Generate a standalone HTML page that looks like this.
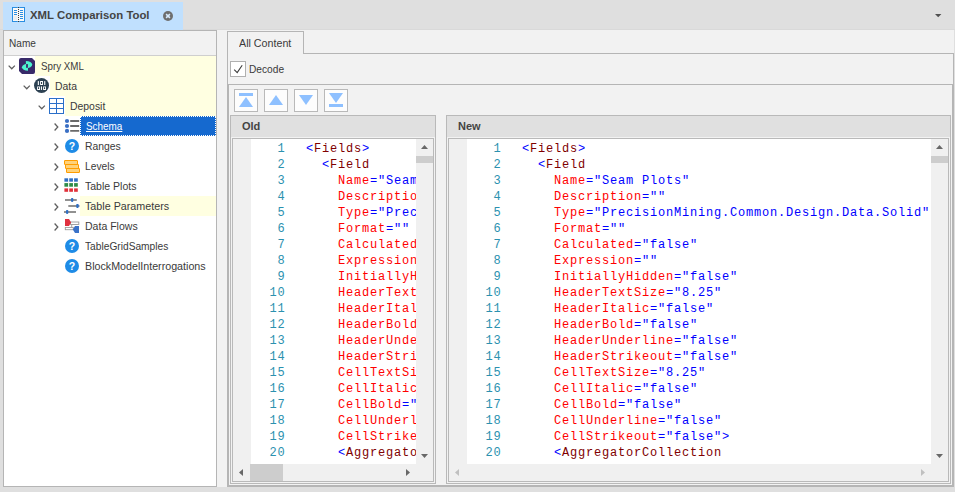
<!DOCTYPE html>
<html><head><meta charset="utf-8"><title>XML Comparison Tool</title>
<style>
html,body{margin:0;padding:0}
body{width:955px;height:492px;background:#dfdfdf;position:relative;overflow:hidden;font-family:"Liberation Sans",sans-serif;font-size:11px;color:#3c3c3c}
.abs,.b{position:absolute}
.b{background:#b5b5b5}
#tab{left:3px;top:2px;width:180px;height:28px;background:#c0e0fe}
.tx{position:absolute;transform-origin:0 0;white-space:nowrap;line-height:14px;font-size:11px;color:#3a3a3a}
#left{left:3px;top:30px;width:214px;height:457px;background:#fff;border:1px solid #b5b5b5;box-sizing:border-box}
#lhead{left:4px;top:31px;width:212px;height:24px;background:#f2f2f2;border-bottom:1px solid #cfcfcf}
.row{position:absolute;height:20px;left:4px;width:212px}
.hl{position:absolute;top:0;height:20px;right:0;background:#ffffe1}
.row svg{position:absolute}
#right{left:217px;top:30px;width:737px;height:457px;background:#f2f2f2}
.code{font-family:"Liberation Mono",monospace;font-size:12px;letter-spacing:0.8px;line-height:16px}
.ln{position:relative;height:16px;white-space:pre}
.p{color:#0000ff}.t{color:#800000}.a{color:#ff0000}
.ln .no{position:absolute;left:0;top:0;width:35.500px;text-align:right;color:#2b91af}
.ln .cd{position:absolute;top:0;margin-left:56px}
.ed{position:absolute;background:#fff;overflow:hidden}
.mg{position:absolute;left:0;top:0;bottom:0;width:18px;background:#f0f0f0}
.grp{position:absolute;border:1px solid #b9b9b9;box-sizing:border-box;background:#f2f2f2}
.gh{position:absolute;left:0;top:0;right:0;height:21px;background:#e0e0e0}
.edb{position:absolute;border:1px solid #b9b9b9;box-sizing:border-box;background:#fff}
.sb{position:absolute;background:#f0f0f0}
.th{position:absolute;background:#cdcdcd}
.btn{position:absolute;top:89px;width:24px;height:23px;box-sizing:border-box;border:1px solid #b9b9b9;background:#fdfdfd}
.btn svg{position:absolute;left:0;top:0}
</style></head><body>
<!-- top document tab -->
<div class="b" style="left:0;top:29px;width:955px;height:1px;background:#d9d9d9"></div>
<div id="tab" class="abs">
<svg class="abs" style="left:9px;top:5px" width="14" height="16" viewBox="0 0 14 16"><rect x="0.500" y="0.500" width="12" height="14" fill="#fdfaf7" stroke="#2a8ee2"/><rect x="1.300" y="8.600" width="3.900" height="4.600" fill="#eceef0"/><rect x="5.800" y="0" width="1.400" height="15" fill="#f1f4f8"/><g stroke="#2a8ee2" stroke-width="1"><path d="M2 3.500h3M2 5.500h3M2 7.500h3M8 3.500h3M8 5.500h3M8 7.500h3M8 9.500h3M8 11.500h3"/></g><path d="M6.500 0v15" stroke="#3c3c3c" stroke-width="1" stroke-dasharray="1 1"/></svg>
<span class="tx" style="left:27px;top:6px;font-weight:bold;font-size:11px;color:#444;transform:scaleX(1.033)">XML Comparison Tool</span>
<svg class="abs" style="left:160px;top:9px" width="10" height="10" viewBox="0 0 10 10"><circle cx="5" cy="5" r="5" fill="#6e6e6e"/><path d="M3.100 3.100l3.800 3.800M6.900 3.100l-3.800 3.800" stroke="#d6e9fb" stroke-width="1.500"/></svg>
</div>
<svg class="abs" style="left:935px;top:14px" width="7" height="4" viewBox="0 0 7 4"><path d="M0 0h6.400l-3.200 3.200z" fill="#505050"/></svg>

<div id="right" class="abs"></div>
<div id="left" class="abs"></div>
<div id="lhead" class="abs"><span class="tx" style="left:5.2px;top:5px;transform:scaleX(0.917)">Name</span></div>

<!-- tree -->
<div class="row" style="top:56px"><div class="hl" style="left:31px"></div>
<svg style="left:3.7px;top:9px" width="9" height="6" viewBox="0 0 9 6"><path d="M0.650 0.650l3.100 3.100 3.100-3.100" fill="none" stroke="#606060" stroke-width="1.300"/></svg>
<svg style="left:15px;top:2px" width="16" height="16" viewBox="0 0 16 16"><path d="M2 0H13L16 3V14a2 2 0 0 1-2 2H3L0 13V2a2 2 0 0 1 2-2z" fill="#382a69"/><path d="M6.900 2.900A6.300 3.650 0 0 1 6.900 10.200z" fill="#4df5cf"/><path d="M9 5.700A6.100 3.550 0 0 0 9 12.800z" fill="#4df5cf"/><rect x="7.100" y="6.100" width="1.800" height="3.700" fill="#382a69"/></svg>
<span class="tx" style="left:36.7px;top:3px;transform:scaleX(0.888)">Spry XML</span></div>

<div class="row" style="top:76px"><div class="hl" style="left:46px"></div>
<svg style="left:18.7px;top:9px" width="9" height="6" viewBox="0 0 9 6"><path d="M0.650 0.650l3.100 3.100 3.100-3.100" fill="none" stroke="#606060" stroke-width="1.300"/></svg>
<svg style="left:30px;top:2px" width="16" height="16" viewBox="0 0 16 16"><circle cx="7.500" cy="7.500" r="7.500" fill="#2c4152"/><g fill="#fff" fill-rule="evenodd"><rect x="3.800" y="3.100" width="1.100" height="3.900"/><path d="M6.100 3.100h2.900v3.900h-2.900zM7 4h1.100v2.100h-1.100z"/><rect x="10.200" y="3.100" width="1.100" height="3.900"/><path d="M3.100 8.400h2.900v3.500h-2.900zM4 9.300h1.100v1.700h-1.100z"/><rect x="6.900" y="8.400" width="1.100" height="3.500"/><path d="M9.100 8.400h2.900v3.500h-2.900zM10 9.300h1.100v1.700h-1.100z"/></g></svg>
<span class="tx" style="left:51px;top:3px;transform:scaleX(0.946)">Data</span></div>

<div class="row" style="top:96px"><div class="hl" style="left:61px"></div>
<svg style="left:33.7px;top:9px" width="9" height="6" viewBox="0 0 9 6"><path d="M0.650 0.650l3.100 3.100 3.100-3.100" fill="none" stroke="#606060" stroke-width="1.300"/></svg>
<svg style="left:45px;top:2px" width="16" height="16" viewBox="0 0 16 16"><rect x="0.500" y="0.500" width="14" height="15" fill="#fff" stroke="#2a6fc9"/><path d="M0.500 5.500h14M0.500 10.500h14M7.500 0.500v15" stroke="#2a6fc9" fill="none"/></svg>
<span class="tx" style="left:66.4px;top:3px;transform:scaleX(0.947)">Deposit</span></div>

<div class="row" style="top:116px"><div class="abs" style="left:76px;top:0;height:20px;right:0;background:#1569cf;outline:1px dotted #fff;outline-offset:-1px"></div>
<svg style="left:50px;top:7px" width="5" height="8" viewBox="0 0 5 8"><path d="M0.600 0.500l3.200 3.500-3.200 3.500" fill="none" stroke="#606060" stroke-width="1.300"/></svg>
<svg style="left:60px;top:2px" width="16" height="16" viewBox="0 0 16 16"><g fill="#3a6fc4"><circle cx="3" cy="3" r="2.100"/><circle cx="3" cy="8" r="2.100"/><circle cx="3" cy="12.900" r="2.100"/></g><path d="M6.200 3h9M6.200 8h9M6.200 12.900h9" stroke="#6a6a6a" stroke-width="1.800"/></svg>
<span class="tx" style="left:81.8px;top:3px;color:#fff;text-decoration:underline;transform:scaleX(0.9)">Schema</span></div>

<div class="row" style="top:136px">
<svg style="left:50px;top:7px" width="5" height="8" viewBox="0 0 5 8"><path d="M0.600 0.500l3.200 3.500-3.200 3.500" fill="none" stroke="#606060" stroke-width="1.300"/></svg>
<svg style="left:61px;top:3px" width="14" height="14" viewBox="0 0 14 14"><circle cx="7" cy="7" r="7" fill="#1e8be6"/><text x="7" y="11" text-anchor="middle" font-family="Liberation Sans,sans-serif" font-weight="bold" font-size="10.5" fill="#fff">?</text></svg>
<span class="tx" style="left:81.1px;top:3px;transform:scaleX(0.942)">Ranges</span></div>

<div class="row" style="top:156px">
<svg style="left:50px;top:7px" width="5" height="8" viewBox="0 0 5 8"><path d="M0.600 0.500l3.200 3.500-3.200 3.500" fill="none" stroke="#606060" stroke-width="1.300"/></svg>
<svg style="left:60px;top:2px" width="16" height="16" viewBox="0 0 16 16"><g fill="#ffd27a" stroke="#ff9d00" stroke-width="1"><rect x="0.500" y="2.500" width="13" height="4" rx="0.300"/><rect x="1.500" y="6.500" width="13" height="4" rx="0.300"/><rect x="2.500" y="10.500" width="13" height="4" rx="0.300"/></g></svg>
<span class="tx" style="left:81.1px;top:3px;transform:scaleX(0.931)">Levels</span></div>

<div class="row" style="top:176px">
<svg style="left:50px;top:7px" width="5" height="8" viewBox="0 0 5 8"><path d="M0.600 0.500l3.200 3.500-3.200 3.500" fill="none" stroke="#606060" stroke-width="1.300"/></svg>
<svg style="left:60px;top:2px" width="16" height="16" viewBox="0 0 16 16"><g fill="#2f6fc4"><rect x="0.400" y="0.300" width="3.700" height="3.400"/><rect x="5.250" y="0.300" width="3.700" height="3.400"/><rect x="10.100" y="0.300" width="3.700" height="3.400"/></g><g fill="#2e8b47"><rect x="0.400" y="5.100" width="3.700" height="3.600"/><rect x="5.250" y="5.100" width="3.700" height="3.600"/><rect x="10.100" y="5.100" width="3.700" height="3.600"/></g><g fill="#e0303a"><rect x="0.400" y="10.400" width="3.700" height="3.400"/><rect x="5.250" y="10.400" width="3.700" height="3.400"/><rect x="10.100" y="10.400" width="3.700" height="3.400"/></g></svg>
<span class="tx" style="left:81.1px;top:3px;transform:scaleX(0.957)">Table Plots</span></div>

<div class="row" style="top:196px"><div class="hl" style="left:76px"></div>
<svg style="left:50px;top:7px" width="5" height="8" viewBox="0 0 5 8"><path d="M0.600 0.500l3.200 3.500-3.200 3.500" fill="none" stroke="#606060" stroke-width="1.300"/></svg>
<svg style="left:60px;top:2px" width="16" height="16" viewBox="0 0 16 16"><path d="M1 2h11.800M4.300 8h11.200M0 14h12" stroke="#6e6e6e" stroke-width="1.600"/><g fill="#2f6fc4"><rect x="7" y="0.100" width="2.300" height="3.800" rx="0.800"/><rect x="12.200" y="6.100" width="2.500" height="3.800" rx="0.800"/><rect x="2" y="12.100" width="2.300" height="3.800" rx="0.800"/></g></svg>
<span class="tx" style="left:81.1px;top:3px;transform:scaleX(0.976)">Table Parameters</span></div>

<div class="row" style="top:216px">
<svg style="left:50px;top:7px" width="5" height="8" viewBox="0 0 5 8"><path d="M0.600 0.500l3.200 3.500-3.200 3.500" fill="none" stroke="#606060" stroke-width="1.300"/></svg>
<svg style="left:60px;top:2px" width="16" height="16" viewBox="0 0 16 16"><g fill="#fff" stroke="#9a9a9a" stroke-width="0.900"><rect x="6.500" y="4" width="8.300" height="2.500"/><rect x="1.300" y="9.400" width="8" height="2.300"/><path d="M7.700 6.500v2.900"/></g><path d="M1 1h4l2.100 3.500-2.100 3.500h-4z" fill="#e0303f"/><path d="M15 8.100h-4l-2.200 3.400 2.200 3.400h4z" fill="#3a72c8"/></svg>
<span class="tx" style="left:81.1px;top:3px;transform:scaleX(0.958)">Data Flows</span></div>

<div class="row" style="top:236px">
<svg style="left:61px;top:3px" width="14" height="14" viewBox="0 0 14 14"><circle cx="7" cy="7" r="7" fill="#1e8be6"/><text x="7" y="11" text-anchor="middle" font-family="Liberation Sans,sans-serif" font-weight="bold" font-size="10.5" fill="#fff">?</text></svg>
<span class="tx" style="left:81.1px;top:3px;transform:scaleX(0.927)">TableGridSamples</span></div>

<div class="row" style="top:256px">
<svg style="left:61px;top:3px" width="14" height="14" viewBox="0 0 14 14"><circle cx="7" cy="7" r="7" fill="#1e8be6"/><text x="7" y="11" text-anchor="middle" font-family="Liberation Sans,sans-serif" font-weight="bold" font-size="10.5" fill="#fff">?</text></svg>
<span class="tx" style="left:81.1px;top:3px;transform:scaleX(0.972)">BlockModelInterrogations</span></div>

<!-- right: tab control -->
<div class="b" style="left:227px;top:53px;width:727px;height:1px"></div>
<div class="b" style="left:227px;top:31px;width:1px;height:456px"></div>
<div class="b" style="left:953px;top:53px;width:1px;height:434px"></div>
<div class="b" style="left:227px;top:486px;width:727px;height:1px"></div>
<div class="abs" style="left:227px;top:31px;width:77px;height:23px;border:1px solid #b5b5b5;border-bottom:none;box-sizing:border-box;background:#f2f2f2"></div>
<span class="tx" style="left:239.1px;top:36px;transform:scaleX(0.972)">All Content</span>
<!-- decode checkbox -->
<div class="abs" style="left:230px;top:61px;width:16px;height:16px;border:1px solid #b0b0b0;box-sizing:border-box;background:#fff"></div>
<svg class="abs" style="left:233px;top:64px" width="11" height="10" viewBox="0 0 11 10"><path d="M1.200 5.600l3 3 5-7.300" fill="none" stroke="#3c3c3c" stroke-width="1.100"/></svg>
<span class="tx" style="left:248.9px;top:62px;transform:scaleX(0.924)">Decode</span>
<!-- inner panel -->
<div class="b" style="left:228px;top:84px;width:725px;height:1px"></div>
<div class="b" style="left:228px;top:84px;width:1px;height:402px"></div>
<div class="b" style="left:952px;top:84px;width:1px;height:402px"></div>
<div class="b" style="left:228px;top:485px;width:725px;height:1px"></div>
<!-- toolbar buttons -->
<div class="btn" style="left:234px"><svg width="22" height="21" viewBox="0 0 22 21"><rect x="4" y="3" width="14" height="3" fill="#8ec0ff"/><path d="M11 7l7 10H4z" fill="#8ec0ff"/></svg></div>
<div class="btn" style="left:264px"><svg width="22" height="21" viewBox="0 0 22 21"><path d="M11 5l7 10H4z" fill="#8ec0ff"/></svg></div>
<div class="btn" style="left:294px"><svg width="22" height="21" viewBox="0 0 22 21"><path d="M11 15l7-10H4z" fill="#8ec0ff"/></svg></div>
<div class="btn" style="left:324px"><svg width="22" height="21" viewBox="0 0 22 21"><rect x="4" y="14" width="14" height="3" fill="#8ec0ff"/><path d="M11 13l7-10H4z" fill="#8ec0ff"/></svg></div>

<!-- Old group -->
<div class="grp" style="left:230px;top:115px;width:206px;height:369px"><div class="gh"></div></div>
<span class="tx" style="left:242px;top:119px;font-weight:bold;color:#444">Old</span>
<div class="edb" style="left:232px;top:138px;width:202px;height:344px"></div>
<div class="ed code" style="left:233px;top:140px;width:183px;height:324px"><div class="mg"></div>
<div style="position:absolute;left:17px;top:1px">
<div class="ln"><span class="no">1</span><span class="cd" style="left:0px"><span class="p">&lt;</span><span class="t">Fields</span><span class="p">&gt;</span></span></div>
<div class="ln"><span class="no">2</span><span class="cd" style="left:16px"><span class="p">&lt;</span><span class="t">Field</span></span></div>
<div class="ln"><span class="no">3</span><span class="cd" style="left:32px"><span class="a">Name</span><span class="p">=&quot;Seam Plots&quot;</span></span></div>
<div class="ln"><span class="no">4</span><span class="cd" style="left:32px"><span class="a">Description</span><span class="p">=&quot;&quot;</span></span></div>
<div class="ln"><span class="no">5</span><span class="cd" style="left:32px"><span class="a">Type</span><span class="p">=&quot;PrecisionMining.Common.Design.Data.Solid&quot;</span></span></div>
<div class="ln"><span class="no">6</span><span class="cd" style="left:32px"><span class="a">Format</span><span class="p">=&quot;&quot;</span></span></div>
<div class="ln"><span class="no">7</span><span class="cd" style="left:32px"><span class="a">Calculated</span><span class="p">=&quot;false&quot;</span></span></div>
<div class="ln"><span class="no">8</span><span class="cd" style="left:32px"><span class="a">Expression</span><span class="p">=&quot;&quot;</span></span></div>
<div class="ln"><span class="no">9</span><span class="cd" style="left:32px"><span class="a">InitiallyHidden</span><span class="p">=&quot;false&quot;</span></span></div>
<div class="ln"><span class="no">10</span><span class="cd" style="left:32px"><span class="a">HeaderTextSize</span><span class="p">=&quot;8.25&quot;</span></span></div>
<div class="ln"><span class="no">11</span><span class="cd" style="left:32px"><span class="a">HeaderItalic</span><span class="p">=&quot;false&quot;</span></span></div>
<div class="ln"><span class="no">12</span><span class="cd" style="left:32px"><span class="a">HeaderBold</span><span class="p">=&quot;false&quot;</span></span></div>
<div class="ln"><span class="no">13</span><span class="cd" style="left:32px"><span class="a">HeaderUnderline</span><span class="p">=&quot;false&quot;</span></span></div>
<div class="ln"><span class="no">14</span><span class="cd" style="left:32px"><span class="a">HeaderStrikeout</span><span class="p">=&quot;false&quot;</span></span></div>
<div class="ln"><span class="no">15</span><span class="cd" style="left:32px"><span class="a">CellTextSize</span><span class="p">=&quot;8.25&quot;</span></span></div>
<div class="ln"><span class="no">16</span><span class="cd" style="left:32px"><span class="a">CellItalic</span><span class="p">=&quot;false&quot;</span></span></div>
<div class="ln"><span class="no">17</span><span class="cd" style="left:32px"><span class="a">CellBold</span><span class="p">=&quot;false&quot;</span></span></div>
<div class="ln"><span class="no">18</span><span class="cd" style="left:32px"><span class="a">CellUnderline</span><span class="p">=&quot;false&quot;</span></span></div>
<div class="ln"><span class="no">19</span><span class="cd" style="left:32px"><span class="a">CellStrikeout</span><span class="p">=&quot;false&quot;</span><span class="p">&gt;</span></span></div>
<div class="ln"><span class="no">20</span><span class="cd" style="left:32px"><span class="p">&lt;</span><span class="t">AggregatorCollection</span></span></div>
</div></div>
<div class="abs" style="left:233px;top:139px;width:18px;height:1px;background:#f0f0f0"></div>
<div class="sb" style="left:416px;top:139px;width:17px;height:325px"></div>
<div class="th" style="left:416px;top:156px;width:17px;height:7px"></div>
<div class="sb" style="left:233px;top:464px;width:200px;height:17px"></div>
<div class="th" style="left:250px;top:464px;width:33px;height:17px"></div>

<svg class="abs" style="left:421px;top:145px" width="7" height="4" viewBox="0 0 7 4"><path d="M0 4h7L3.500 0z" fill="#686868"/></svg>
<svg class="abs" style="left:421px;top:454px" width="7" height="4" viewBox="0 0 7 4"><path d="M0 0h7L3.500 4z" fill="#686868"/></svg>
<svg class="abs" style="left:238.8px;top:469px" width="4" height="7" viewBox="0 0 4 7"><path d="M4 0v7L0 3.500z" fill="#686868"/></svg>
<svg class="abs" style="left:406.2px;top:469px" width="4" height="7" viewBox="0 0 4 7"><path d="M0 0v7l4-3.500z" fill="#686868"/></svg>
<!-- New group -->
<div class="grp" style="left:446px;top:115px;width:505px;height:369px"><div class="gh"></div></div>
<span class="tx" style="left:458px;top:119px;font-weight:bold;color:#444">New</span>
<div class="edb" style="left:448px;top:138px;width:501px;height:344px"></div>
<div class="ed code" style="left:449px;top:140px;width:482px;height:324px"><div class="mg"></div>
<div style="position:absolute;left:17px;top:1px">
<div class="ln"><span class="no">1</span><span class="cd" style="left:0px"><span class="p">&lt;</span><span class="t">Fields</span><span class="p">&gt;</span></span></div>
<div class="ln"><span class="no">2</span><span class="cd" style="left:16px"><span class="p">&lt;</span><span class="t">Field</span></span></div>
<div class="ln"><span class="no">3</span><span class="cd" style="left:32px"><span class="a">Name</span><span class="p">=&quot;Seam Plots&quot;</span></span></div>
<div class="ln"><span class="no">4</span><span class="cd" style="left:32px"><span class="a">Description</span><span class="p">=&quot;&quot;</span></span></div>
<div class="ln"><span class="no">5</span><span class="cd" style="left:32px"><span class="a">Type</span><span class="p">=&quot;PrecisionMining.Common.Design.Data.Solid&quot;</span></span></div>
<div class="ln"><span class="no">6</span><span class="cd" style="left:32px"><span class="a">Format</span><span class="p">=&quot;&quot;</span></span></div>
<div class="ln"><span class="no">7</span><span class="cd" style="left:32px"><span class="a">Calculated</span><span class="p">=&quot;false&quot;</span></span></div>
<div class="ln"><span class="no">8</span><span class="cd" style="left:32px"><span class="a">Expression</span><span class="p">=&quot;&quot;</span></span></div>
<div class="ln"><span class="no">9</span><span class="cd" style="left:32px"><span class="a">InitiallyHidden</span><span class="p">=&quot;false&quot;</span></span></div>
<div class="ln"><span class="no">10</span><span class="cd" style="left:32px"><span class="a">HeaderTextSize</span><span class="p">=&quot;8.25&quot;</span></span></div>
<div class="ln"><span class="no">11</span><span class="cd" style="left:32px"><span class="a">HeaderItalic</span><span class="p">=&quot;false&quot;</span></span></div>
<div class="ln"><span class="no">12</span><span class="cd" style="left:32px"><span class="a">HeaderBold</span><span class="p">=&quot;false&quot;</span></span></div>
<div class="ln"><span class="no">13</span><span class="cd" style="left:32px"><span class="a">HeaderUnderline</span><span class="p">=&quot;false&quot;</span></span></div>
<div class="ln"><span class="no">14</span><span class="cd" style="left:32px"><span class="a">HeaderStrikeout</span><span class="p">=&quot;false&quot;</span></span></div>
<div class="ln"><span class="no">15</span><span class="cd" style="left:32px"><span class="a">CellTextSize</span><span class="p">=&quot;8.25&quot;</span></span></div>
<div class="ln"><span class="no">16</span><span class="cd" style="left:32px"><span class="a">CellItalic</span><span class="p">=&quot;false&quot;</span></span></div>
<div class="ln"><span class="no">17</span><span class="cd" style="left:32px"><span class="a">CellBold</span><span class="p">=&quot;false&quot;</span></span></div>
<div class="ln"><span class="no">18</span><span class="cd" style="left:32px"><span class="a">CellUnderline</span><span class="p">=&quot;false&quot;</span></span></div>
<div class="ln"><span class="no">19</span><span class="cd" style="left:32px"><span class="a">CellStrikeout</span><span class="p">=&quot;false&quot;</span><span class="p">&gt;</span></span></div>
<div class="ln"><span class="no">20</span><span class="cd" style="left:32px"><span class="p">&lt;</span><span class="t">AggregatorCollection</span></span></div>
</div></div>
<div class="abs" style="left:449px;top:139px;width:18px;height:1px;background:#f0f0f0"></div>
<div class="sb" style="left:931px;top:139px;width:17px;height:325px"></div>
<div class="th" style="left:931px;top:156px;width:17px;height:7px"></div>
<div class="sb" style="left:449px;top:464px;width:499px;height:17px"></div>
<svg class="abs" style="left:936px;top:145px" width="7" height="4" viewBox="0 0 7 4"><path d="M0 4h7L3.500 0z" fill="#686868"/></svg>
<svg class="abs" style="left:936px;top:454px" width="7" height="4" viewBox="0 0 7 4"><path d="M0 0h7L3.500 4z" fill="#686868"/></svg>
<svg class="abs" style="left:455px;top:469px" width="4" height="7" viewBox="0 0 4 7"><path d="M4 0v7L0 3.500z" fill="#c0c0c0"/></svg>
<svg class="abs" style="left:921px;top:469px" width="4" height="7" viewBox="0 0 4 7"><path d="M0 0v7l4-3.500z" fill="#c0c0c0"/></svg>
</body></html>
